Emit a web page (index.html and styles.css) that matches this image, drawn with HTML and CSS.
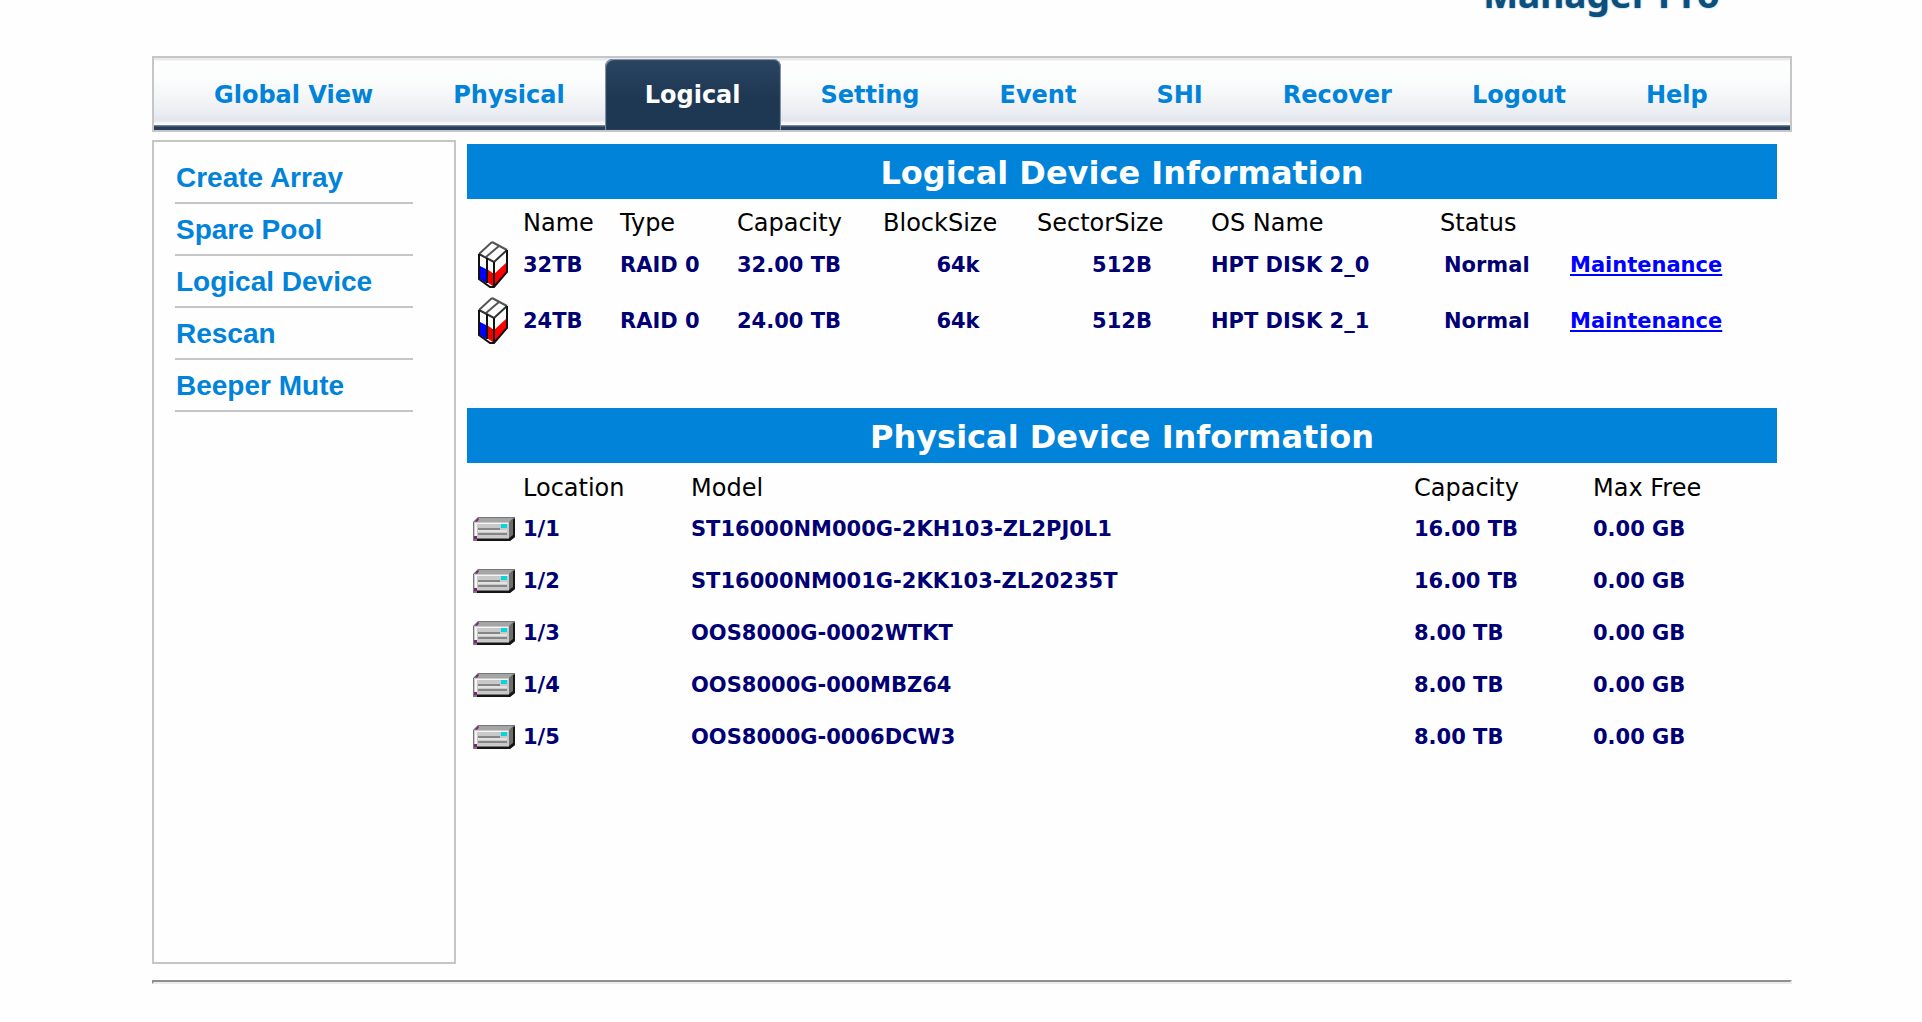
FILE: index.html
```html
<!DOCTYPE html>
<html lang="en">
<head>
<meta charset="utf-8">
<title>Logical Device Information</title>
<link rel="stylesheet" href="styles.css">
</head>
<body>
<svg class="sprites" aria-hidden="true">
  <symbol id="array" viewBox="0 0 32 48">
    <path d="M15 1 30 9V30L17 46 12 44 2 38V13Z" fill="#fff"/>
    <path d="M3 25 9 28V42L3 38Z" fill="#00f"/>
    <path d="M10 28 17 33V46L10 41Z" fill="#e00"/>
    <path d="M17 33 30 21V31L17 46Z" fill="#f00"/>
    <path d="M15 1 30 9M2 13 15 1M9 16 22 5" fill="none" stroke="#555" stroke-width="2"/>
    <path d="M2 13 17 21 30 9" fill="none" stroke="#333" stroke-width="2"/>
    <path d="M30 9V31L17 46 13 46 2 38V13M10 17V42M17 21V46" fill="none" stroke="#111" stroke-width="2"/>
  </symbol>
  <symbol id="drive" viewBox="0 0 42 24">
    <path d="M5 0H42V20L37 24H0V5Z" fill="#777"/>
    <path d="M38 4 42 1V20L37 24H4V22H36Z" fill="#151515"/>
    <path d="M6 1H40L36 5H2Z" fill="#a5a5a5"/>
    <path d="M36 5 40 2V18L36 21Z" fill="#6e6e6e"/>
    <path d="M1 5H36V21H1Z" fill="#c9c9c9"/>
    <path d="M2 6H35V7H4V20H2Z" fill="#f5f5f5"/>
    <path d="M5 11H27V13H5ZM5 16H34V18H5Z" fill="#858585"/>
    <path d="M5 13H34V15H5Z" fill="#e2e2e2"/>
    <path d="M28 7H34V11H28Z" fill="#00d8dc"/>
    <path d="M2 4 5 1 6 2 4 5ZM1 19H4V22H1Z" fill="#81207f"/>
  </symbol>
</svg>
<div class="page">
  <header class="brand"><span class="brand-name">Manager Pro</span></header>
  <nav class="tabs">
    <a href="#">Global View</a>
    <a href="#">Physical</a>
    <a href="#" class="active">Logical</a>
    <a href="#">Setting</a>
    <a href="#">Event</a>
    <a href="#">SHI</a>
    <a href="#">Recover</a>
    <a href="#">Logout</a>
    <a href="#">Help</a>
  </nav>
  <div class="body">
    <aside class="sidebar">
      <a href="#">Create Array</a>
      <a href="#">Spare Pool</a>
      <a href="#">Logical Device</a>
      <a href="#">Rescan</a>
      <a href="#">Beeper Mute</a>
    </aside>
    <main class="content">
      <section class="logical">
        <h2>Logical Device Information</h2>
        <table>
          <colgroup><col class="c-icon"><col class="c-name"><col class="c-type"><col class="c-cap"><col class="c-block"><col class="c-sector"><col class="c-os"><col class="c-status"><col></colgroup>
          <thead><tr><th></th><th>Name</th><th>Type</th><th>Capacity</th><th>BlockSize</th><th>SectorSize</th><th>OS Name</th><th>Status</th><th></th></tr></thead>
          <tbody>
            <tr><td class="icon"><svg width="32" height="48"><use href="#array"/></svg></td><td>32TB</td><td>RAID 0</td><td>32.00 TB</td><td class="mid">64k</td><td class="mid">512B</td><td>HPT DISK 2_0</td><td class="status">Normal</td><td><a href="#">Maintenance</a></td></tr>
            <tr><td class="icon"><svg width="32" height="48"><use href="#array"/></svg></td><td>24TB</td><td>RAID 0</td><td>24.00 TB</td><td class="mid">64k</td><td class="mid">512B</td><td>HPT DISK 2_1</td><td class="status">Normal</td><td><a href="#">Maintenance</a></td></tr>
          </tbody>
        </table>
      </section>
      <section class="physical">
        <h2>Physical Device Information</h2>
        <table>
          <colgroup><col class="c-icon"><col class="c-location"><col><col class="c-size"><col class="c-free"></colgroup>
          <thead><tr><th></th><th>Location</th><th>Model</th><th>Capacity</th><th>Max Free</th></tr></thead>
          <tbody>
            <tr><td class="icon"><svg width="42" height="24"><use href="#drive"/></svg></td><td>1/1</td><td>ST16000NM000G-2KH103-ZL2PJ0L1</td><td>16.00 TB</td><td>0.00 GB</td></tr>
            <tr><td class="icon"><svg width="42" height="24"><use href="#drive"/></svg></td><td>1/2</td><td>ST16000NM001G-2KK103-ZL20235T</td><td>16.00 TB</td><td>0.00 GB</td></tr>
            <tr><td class="icon"><svg width="42" height="24"><use href="#drive"/></svg></td><td>1/3</td><td>OOS8000G-0002WTKT</td><td>8.00 TB</td><td>0.00 GB</td></tr>
            <tr><td class="icon"><svg width="42" height="24"><use href="#drive"/></svg></td><td>1/4</td><td>OOS8000G-000MBZ64</td><td>8.00 TB</td><td>0.00 GB</td></tr>
            <tr><td class="icon"><svg width="42" height="24"><use href="#drive"/></svg></td><td>1/5</td><td>OOS8000G-0006DCW3</td><td>8.00 TB</td><td>0.00 GB</td></tr>
          </tbody>
        </table>
      </section>
    </main>
  </div>
  <hr>
</div>
</body>
</html>
```
FILE: styles.css
```css
* { box-sizing: border-box; }
body { margin: 0; background: #fefefe; font-family: Verdana, "DejaVu Sans", sans-serif; }
.sprites { display: none; }
.page { padding: 0 130px 0 152px; }

/* The brand line is bottom-aligned, so its upper part runs off the page top. */
.brand { height: 56px; display: flex; align-items: flex-end; justify-content: flex-end; padding: 0 72px 36px 0; }
.brand-name { font: bold 37px/52px "Noto Sans", sans-serif; color: #0b4f7d; text-shadow: 0 0 2px #7fa9c4; }

.tabs {
  display: flex;
  height: 76px;
  padding-left: 20px;
  border: 2px solid #c6c6c6;
  background:
    linear-gradient(#8e9aa8, #243f5d 2px) bottom / 100% 5px no-repeat,
    linear-gradient(#e8eaee 0, #e8eaee 2px, #fefefe 3px, #fbfcfc 24px, #f2f4f6 42px, #ebeef2 54px, #e2e5ea 62px, #f4f6f8 65px, #fff 67px);
}
.tabs a {
  padding: 0 40px;
  font-size: 24px;
  line-height: 74px;
  font-weight: bold;
  white-space: nowrap;
  color: #0083d9;
  text-decoration: none;
}
.tabs .active {
  color: #fff;
  margin-top: 1px;
  line-height: 72px;
  border-radius: 8px 8px 0 0;
  background: linear-gradient(#2a4561, #1e3854 55%, #1e3854);
  box-shadow: inset 1px 1px 1px #8b9bac, inset -1px 0 1px #8b9bac;
}

.body { display: grid; grid-template-columns: 304px 1fr; gap: 11px; margin-top: 8px; }
.sidebar { min-height: 824px; padding: 10px 41px 0 21px; border: 2px solid #c6c6c6; }
.sidebar a {
  display: block;
  height: 52px;
  padding-left: 1px;
  border-bottom: 2px solid #c6c6c6;
  font: bold 28px/52px Arial, "Liberation Sans", sans-serif;
  color: #0083d9;
  text-decoration: none;
}

.content { padding: 4px 15px 0 0; }
h2 { margin: 0; height: 55px; background: #0083d9; color: #fff; font-size: 32px; line-height: 58px; text-align: center; }
table { width: 100%; table-layout: fixed; border-collapse: collapse; }
th, td { padding: 0; text-align: left; white-space: nowrap; }
th { font-size: 24px; line-height: 28px; font-weight: normal; color: #000; vertical-align: bottom; }
td { font-size: 21px; line-height: 28px; font-weight: bold; color: #000074; }
td a { color: #00f; }
svg { display: block; }
.icon { padding-left: 6px; }
.logical .icon { padding-left: 10px; }
.mid { text-align: center; padding-right: 4px; }
.status { padding-left: 4px; }
.logical { min-height: 264px; }
.logical thead tr { height: 38px; }
.logical tbody tr { height: 56px; }
.physical thead tr { height: 40px; }
.physical thead th { padding-bottom: 1px; }
.physical tbody tr { height: 52px; }

.c-icon { width: 56px; }
.c-name { width: 97px; }
.c-type { width: 117px; }
.c-cap { width: 146px; }
.c-block { width: 154px; }
.c-sector { width: 174px; }
.c-os { width: 229px; }
.c-status { width: 130px; }
.c-location { width: 168px; }
.c-size { width: 179px; }
.c-free { width: 184px; }

hr { margin: 16px 0 0; border: 2px solid; border-color: #8f8f8f #ececec #ececec #8f8f8f; }
```
